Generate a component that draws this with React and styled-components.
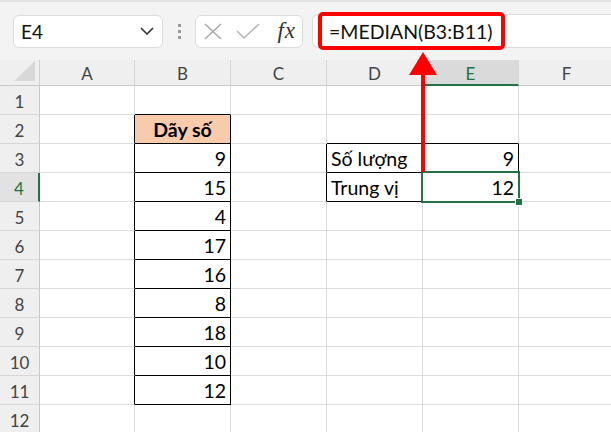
import styled, { createGlobalStyle } from 'styled-components';

const GlobalStyle = createGlobalStyle`
  body {
    margin: 0;
    background: #fff;
    overflow: hidden;
    font-family: Lato, "Liberation Sans", sans-serif;
  }
`;

const GREEN = '#217346';

const Page = styled.div`
  position: relative;
  width: 611px;
  height: 432px;
  overflow: hidden;
`;

const Toolbar = styled.div`
  height: 60px;
  box-sizing: border-box;
  border-top: 2px solid #e2e2e2;
  background: #f3f3f3;
  display: flex;
  align-items: center;
  padding-left: 13px;
`;

const Box = styled.div`
  height: 33px;
  box-sizing: border-box;
  background: #fff;
  border: 1px solid #dcdcdc;
  border-radius: 6px;
  display: flex;
  align-items: center;
`;

const NameBox = styled(Box)`
  width: 150px;
  padding: 0 8px 0 7px;
  justify-content: space-between;
  font-size: 19px;
  color: #111;
`;

const Dots = styled.div`
  width: 32px;
  display: flex;
  flex-direction: column;
  align-items: center;
  gap: 3px;
  span {
    width: 3px;
    height: 3px;
    background: #9a9a9a;
  }
`;

const FxBox = styled(Box)`
  width: 108px;
  padding: 0 6px 0 7px;
  gap: 13px;
`;

const Fx = styled.span`
  margin-left: auto;
  font-family: "Liberation Serif", serif;
  font-style: italic;
  font-size: 23px;
  color: #333;
  letter-spacing: 1px;
`;

const FormulaInput = styled.div`
  flex: 1;
  margin-left: 9px;
  height: 34px;
  box-sizing: border-box;
  background: #fff;
  border: 1px solid #dcdcdc;
  border-right: none;
  border-radius: 6px 0 0 6px;
  display: flex;
  align-items: center;
  padding-left: 5px;
`;

const Highlight = styled.span`
  height: 38px;
  box-sizing: border-box;
  border: 4px solid #ff0000;
  border-radius: 5px;
  margin: -2px 0;
  padding: 0 8px 0 7px;
  display: flex;
  align-items: center;
  font-size: 19.5px;
  color: #111;
  white-space: nowrap;
`;

const Sheet = styled.div`
  display: grid;
  grid-template-columns: 40px 95px repeat(5, 96px);
  grid-template-rows: 26px repeat(12, 29px);
`;

const Corner = styled.div`
  background: #efefef;
  border-right: 1px solid #cfcfcf;
  border-bottom: 1px solid #c8c8c8;
  display: flex;
  align-items: flex-end;
  justify-content: flex-end;
  padding: 0 3px 3px 0;
`;

const ColHead = styled.div`
  background: ${(p) => (p.$active ? '#dadada' : '#efefef')};
  border-right: 1px solid #d6d6d6;
  border-bottom: ${(p) => (p.$active ? `2px solid ${GREEN}` : '1px solid #c8c8c8')};
  color: ${(p) => (p.$active ? GREEN : '#444')};
  font-size: 17px;
  display: flex;
  align-items: center;
  justify-content: center;
  padding-top: 2px;
`;

const RowHead = styled.div`
  background: ${(p) => (p.$active ? '#e2e2e2' : '#efefef')};
  border-right: ${(p) => (p.$active ? `2px solid ${GREEN}` : '1px solid #c8c8c8')};
  border-bottom: 1px solid #d6d6d6;
  color: ${(p) => (p.$active ? GREEN : '#444')};
  font-size: 17px;
  display: flex;
  align-items: center;
  justify-content: center;
  padding-top: 2px;
`;

const Cell = styled.div`
  position: relative;
  box-sizing: border-box;
  background: ${(p) => p.$fill || '#fff'};
  border-right: 1px solid ${(p) => (p.$right ? '#000' : '#dcdcdc')};
  border-bottom: 1px solid ${(p) => (p.$bottom ? '#000' : '#dcdcdc')};
  display: flex;
  align-items: flex-end;
  justify-content: ${(p) => p.$align};
  padding: 0 4px 2px 4px;
  font-size: 19.5px;
  font-weight: ${(p) => (p.$bold ? 700 : 400)};
  color: #000;
  white-space: nowrap;
  z-index: ${(p) => (p.$selected ? 3 : 'auto')};

  ${(p) =>
    p.$selected &&
    `
    &::after {
      content: '';
      position: absolute;
      left: -2px;
      top: -2px;
      right: -2px;
      bottom: -2px;
      border: 2px solid ${GREEN};
      z-index: 3;
    }
    &::before {
      content: '';
      position: absolute;
      right: -5px;
      bottom: -5px;
      width: 6px;
      height: 6px;
      background: ${GREEN};
      border: 1px solid #fff;
      z-index: 4;
    }
  `}
`;

const Arrow = styled.svg`
  position: absolute;
  left: 407px;
  top: 50px;
  z-index: 5;
`;

const COLS = ['A', 'B', 'C', 'D', 'E', 'F'];

const values = {
  B2: 'Dãy số',
  B3: 9,
  B4: 15,
  B5: 4,
  B6: 17,
  B7: 16,
  B8: 8,
  B9: 18,
  B10: 10,
  B11: 12,
  D3: 'Số lượng',
  E3: 9,
  D4: 'Trung vị',
  E4: 12,
};

const boxed = (c, r) => {
  const col = COLS[c];
  if (col === 'B' && r >= 2 && r <= 11) return true;
  if ((col === 'D' || col === 'E') && (r === 3 || r === 4)) return true;
  return false;
};

function Chevron() {
  return (
    <svg width="14" height="8" viewBox="0 0 14 8">
      <polyline points="1,1 7,7 13,1" fill="none" stroke="#333" strokeWidth="1.6" />
    </svg>
  );
}

function CrossIcon() {
  return (
    <svg width="20" height="17" viewBox="0 0 20 17">
      <path d="M2 1 L18 16 M18 1 L2 16" stroke="#a8a8a8" strokeWidth="1.5" fill="none" />
    </svg>
  );
}

function CheckIcon() {
  return (
    <svg width="24" height="17" viewBox="0 0 24 17">
      <path d="M1 8 L8 15 L23 1" stroke="#b4b4b4" strokeWidth="1.5" fill="none" />
    </svg>
  );
}

export default function App() {
  const rows = Array.from({ length: 12 }, (_, i) => i + 1);
  return (
    <Page>
      <GlobalStyle />
      <Toolbar>
        <NameBox>
          <span>E4</span>
          <Chevron />
        </NameBox>
        <Dots>
          <span />
          <span />
          <span />
        </Dots>
        <FxBox>
          <CrossIcon />
          <CheckIcon />
          <Fx>fx</Fx>
        </FxBox>
        <FormulaInput>
          <Highlight>=MEDIAN(B3:B11)</Highlight>
        </FormulaInput>
      </Toolbar>

      <Sheet>
        <Corner>
          <svg width="22" height="21" viewBox="0 0 22 21">
            <polygon points="21,0 21,20 0,20" fill="#d8d8d8" />
          </svg>
        </Corner>
        {COLS.map((c) => (
          <ColHead key={c} $active={c === 'E'}>
            {c}
          </ColHead>
        ))}
        {rows.map((r) => [
          <RowHead key={`h${r}`} $active={r === 4}>
            {r}
          </RowHead>,
          ...COLS.map((c, ci) => {
            const key = `${c}${r}`;
            const v = values[key];
            const isBox = boxed(ci, r);
            const right = isBox || (ci + 1 < COLS.length && boxed(ci + 1, r));
            const bottom = isBox || boxed(ci, r + 1);
            const header = key === 'B2';
            return (
              <Cell
                key={key}
                $right={right}
                $bottom={bottom}
                $fill={header ? '#f8cbad' : undefined}
                $bold={header}
                $align={header ? 'center' : typeof v === 'number' ? 'flex-end' : 'flex-start'}
                $selected={key === 'E4'}
              >
                {v}
              </Cell>
            );
          }),
        ])}
      </Sheet>

      <Arrow width="32" height="124" viewBox="0 0 32 124">
        <polygon points="16,2 2,25 30,25" fill="#ff0000" />
        <rect x="14" y="24" width="4" height="98" fill="#ff0000" />
      </Arrow>
    </Page>
  );
}
